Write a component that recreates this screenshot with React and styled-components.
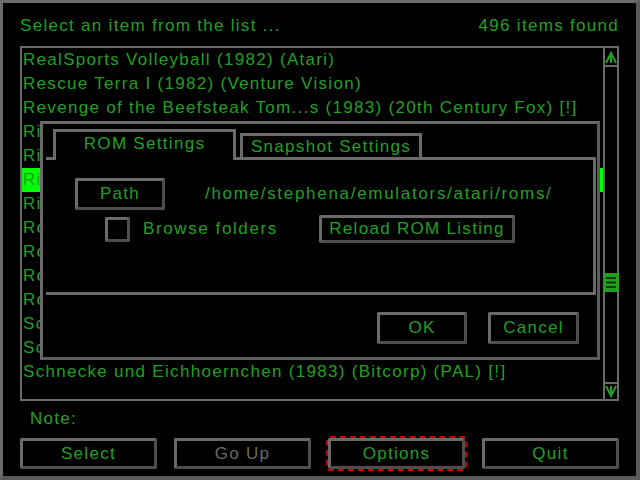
import React from "react";
import styled, { createGlobalStyle } from "styled-components";

const GREEN = "#20a020";
const HI = "#00ff00";
const LIGHT = "#6a6a6a";
const DARK = "#4e4e4e";

const Global = createGlobalStyle`
  html, body { margin: 0; padding: 0; background: #000; }
  #root { width: 640px; height: 480px; }
  * { box-sizing: border-box; }
`;

const Frame = styled.div`
  position: relative;
  width: 640px;
  height: 480px;
  background: #000;
  border-style: solid;
  border-width: 3px 4px 4px 3px;
  border-color: ${LIGHT} #5a5a5a #5a5a5a ${LIGHT};
  padding: 11px 17px 7px 17px;
  display: flex;
  flex-direction: column;
  font-family: "Liberation Sans", Arial, sans-serif;
  font-size: 17px;
  letter-spacing: 1.3px;
  color: ${GREEN};
`;

const Header = styled.div`
  display: flex;
  justify-content: space-between;
  height: 24px;
  line-height: 24px;
  margin-bottom: 8px;
  white-space: nowrap;
`;

const ListBox = styled.div`
  height: 355px;
  border: 2px solid ${LIGHT};
  display: flex;
`;

const List = styled.div`
  flex: 1;
  overflow: hidden;
`;

const Row = styled.div`
  height: 24px;
  line-height: 24px;
  padding-left: 1px;
  white-space: nowrap;
  background: ${(p) => (p.$selected ? HI : "transparent")};
  color: ${GREEN};
`;

const ScrollBar = styled.div`
  position: relative;
  width: 14px;
  border-left: 2px solid ${LIGHT};
  display: flex;
  flex-direction: column;
`;

const ArrowBox = styled.div`
  height: ${(p) => (p.$down ? "17px" : "19px")};
  border-style: solid;
  border-color: ${LIGHT};
  border-width: ${(p) => (p.$down ? "2px 0 0 0" : "0 0 2px 0")};
  display: flex;
  align-items: center;
  justify-content: center;
`;

const Track = styled.div`
  flex: 1;
`;

const Thumb = styled.svg`
  position: absolute;
  left: -2px;
  top: 225px;
  width: 16px;
  height: 19px;
  display: block;
`;

const Note = styled.div`
  margin-top: 6px;
  height: 24px;
  line-height: 24px;
  padding-left: 10px;
`;

const ButtonRow = styled.div`
  margin-top: 7px;
  display: flex;
  justify-content: space-between;
`;

const Button = styled.div`
  width: ${(p) => p.$w || 137}px;
  height: ${(p) => p.$h || 31}px;
  border: 3px solid;
  border-color: ${LIGHT} ${DARK} ${DARK} ${LIGHT};
  border-radius: 2px;
  display: flex;
  align-items: center;
  justify-content: center;
  line-height: 20px;
  white-space: nowrap;
  color: ${(p) => (p.$disabled ? "#6a6a6a" : GREEN)};
  outline: ${(p) => (p.$focus ? "2px dashed #d00000" : "none")};
  outline-offset: 0;
  flex: none;
`;

const Dialog = styled.div`
  position: absolute;
  left: 37px;
  top: 118px;
  width: 560px;
  height: 239px;
  background: #000;
  border: 3px solid;
  border-color: ${LIGHT} #5c5c5c #5c5c5c ${LIGHT};
  padding: 5px 1px 0 3px;
  display: flex;
  flex-direction: column;
`;

const TabBar = styled.div`
  display: flex;
  align-items: flex-end;
  height: 31px;
`;

const TabLine = styled.div`
  width: ${(p) => (p.$w ? `${p.$w}px` : "auto")};
  flex: ${(p) => (p.$w ? "none" : "1")};
  height: 3px;
  background: ${LIGHT};
`;

const Tab = styled.div`
  flex: none;
  width: ${(p) => p.$w}px;
  height: ${(p) => (p.$active ? 31 : 27)}px;
  border: 3px solid ${LIGHT};
  border-bottom-width: ${(p) => (p.$active ? 0 : 3)}px;
  text-align: center;
  line-height: ${(p) => (p.$active ? 24 : 21)}px;
  white-space: nowrap;
`;

const TabBody = styled.div`
  height: 135px;
  border-right: 3px solid ${LIGHT};
  border-bottom: 3px solid ${LIGHT};
  padding-top: 18px;
`;

const BodyRow = styled.div`
  display: flex;
  align-items: center;
  height: ${(p) => p.$h}px;
  margin-top: ${(p) => p.$mt || 0}px;
`;

const Spacer = styled.div`
  flex: none;
  width: ${(p) => p.$w}px;
`;

const Label = styled.div`
  flex: none;
  width: ${(p) => (p.$w ? `${p.$w}px` : "auto")};
  white-space: nowrap;
  line-height: 24px;
  letter-spacing: ${(p) => p.$ls || "1.3px"};
`;

const Checkbox = styled.div`
  flex: none;
  width: 25px;
  height: 25px;
  border: 3px solid;
  border-color: ${LIGHT} ${DARK} ${DARK} ${LIGHT};
  border-radius: 2px;
`;

const Footer = styled.div`
  display: flex;
  justify-content: flex-end;
  gap: 21px;
  padding-right: 17px;
  margin-top: 17px;
`;

const UpArrow = () => (
  <svg width="12" height="14" viewBox="0 0 12 14">
    <path d="M1 13 L6 3 L11 13 M6 2 L6 13" stroke={GREEN} strokeWidth="2" fill="none" />
  </svg>
);

const DownArrow = () => (
  <svg width="12" height="14" viewBox="0 0 12 14">
    <path d="M1 1 L6 11 L11 1 M6 1 L6 12" stroke={GREEN} strokeWidth="2" fill="none" />
  </svg>
);

const rows = [
  "RealSports Volleyball (1982) (Atari)",
  "Rescue Terra I (1982) (Venture Vision)",
  "Revenge of the Beefsteak Tom...s (1983) (20th Century Fox) [!]",
  "Riddle of the Sphinx (1982) (Imagic)",
  "River Patrol (1984) (Tigervision)",
  "River Raid (1982) (Activision) [!]",
  "River Raid II (1988) (Activision)",
  "Road Runner (1989) (Atari)",
  "Robin Hood (1983) (Xonox)",
  "Robot Tank (1983) (Activision) [!]",
  "Roc 'n Rope (1984) (Coleco)",
  "Schiessbude (1983) (Ariola) (PAL)",
  "Schlumpf (1983) (Ariola) (PAL)",
  "Schnecke und Eichhoernchen (1983) (Bitcorp) (PAL) [!]",
];

export default function App() {
  return (
    <>
      <Global />
      <Frame>
        <Header>
          <span>Select an item from the list ...</span>
          <span>496 items found</span>
        </Header>
        <ListBox>
          <List>
            {rows.map((r, i) => (
              <Row key={i} $selected={i === 5}>
                {r}
              </Row>
            ))}
          </List>
          <ScrollBar>
            <ArrowBox>
              <UpArrow />
            </ArrowBox>
            <Track />
            <ArrowBox $down>
              <DownArrow />
            </ArrowBox>
            <Thumb viewBox="0 0 16 19">
              <rect x="0" y="0" width="16" height="19" fill={GREEN} />
              <rect x="3" y="4" width="10" height="2" fill="#0a3a0a" />
              <rect x="3" y="8.5" width="10" height="2" fill="#0a3a0a" />
              <rect x="3" y="13" width="10" height="2" fill="#0a3a0a" />
            </Thumb>
          </ScrollBar>
        </ListBox>
        <Note>Note:</Note>
        <ButtonRow>
          <Button>Select</Button>
          <Button $disabled>Go Up</Button>
          <Button $focus>Options</Button>
          <Button>Quit</Button>
        </ButtonRow>

        <Dialog>
          <TabBar>
            <TabLine $w={7} />
            <Tab $active $w={183}>ROM Settings</Tab>
            <TabLine $w={4} />
            <Tab $w={182}>Snapshot Settings</Tab>
            <TabLine />
          </TabBar>
          <TabBody>
            <BodyRow $h={32}>
              <Spacer $w={29} />
              <Button $w={90} $h={32}>Path</Button>
              <Spacer $w={40} />
              <Label $ls="1.7px">/home/stephena/emulators/atari/roms/</Label>
            </BodyRow>
            <BodyRow $h={28} $mt={5}>
              <Spacer $w={59} />
              <Checkbox />
              <Spacer $w={13} />
              <Label $w={176} $ls="1.6px">Browse folders</Label>
              <Button $w={196} $h={28}>Reload ROM Listing</Button>
            </BodyRow>
          </TabBody>
          <Footer>
            <Button $w={90} $h={32}>OK</Button>
            <Button $w={91} $h={32}>Cancel</Button>
          </Footer>
        </Dialog>
      </Frame>
    </>
  );
}
